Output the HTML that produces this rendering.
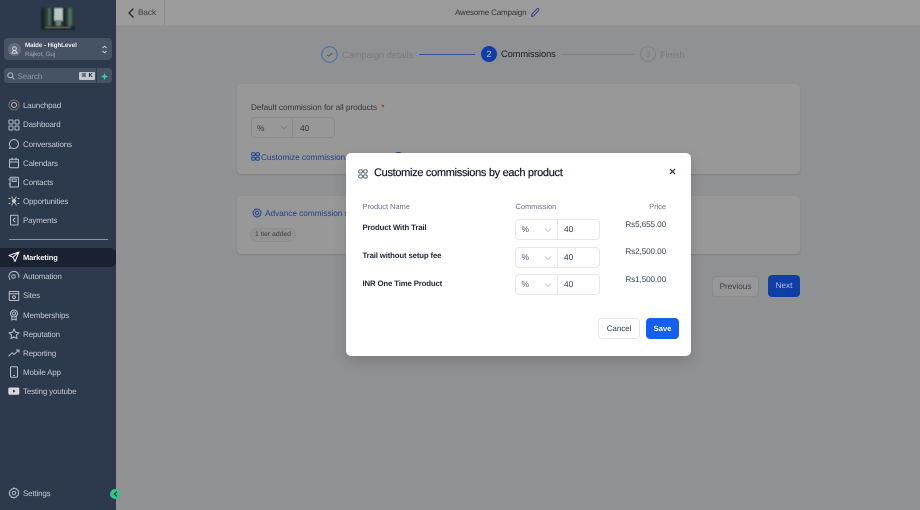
<!DOCTYPE html>
<html><head><meta charset="utf-8">
<style>
*{box-sizing:border-box}
html,body{margin:0;padding:0;width:920px;height:510px;overflow:hidden;background:#909193;font-family:"Liberation Sans",sans-serif;text-rendering:geometricPrecision}
.a{position:absolute;white-space:nowrap}
#side{position:absolute;left:0;top:0;width:116px;height:510px;background:#2d394c}
.nav{position:absolute;left:23px;margin-top:.8px;font-size:8px;letter-spacing:-.18px;color:#c3c8d0;font-weight:400;line-height:12px;white-space:nowrap}
svg.i{position:absolute;left:8px;width:12px;height:12px;fill:none;stroke:#b9bfc9;stroke-width:1;stroke-linecap:round;stroke-linejoin:round}
.card{position:absolute;background:#989898;border-radius:4px;box-shadow:0 1px 2px rgba(0,0,0,.12)}
.sel{position:absolute;border:1px solid #e5e7eb;border-radius:4px;background:#fff;width:85px;height:21px}
.sel i{position:absolute;left:41px;top:0;height:19px;width:1px;background:#e5e7eb}
.sel b{position:absolute;left:5.5px;top:4px;font:400 8.400px "Liberation Sans",sans-serif;color:#4b5563}
.sel u{position:absolute;left:48px;top:4px;text-decoration:none;font:400 8.400px "Liberation Sans",sans-serif;color:#374151}
.sel svg{position:absolute;left:28px;top:7px;width:8px;height:6px;fill:none;stroke:#c5c9d0;stroke-width:1}
.pn{position:absolute;left:362.5px;margin-top:.8px;font-size:7.800px;font-weight:700;color:#1f2937;letter-spacing:-.15px;white-space:nowrap;line-height:12px}
.pr{position:absolute;right:254px;margin-top:.5px;font-size:8.100px;letter-spacing:-.08px;color:#374151;white-space:nowrap;line-height:12px}
</style></head><body>

<!-- top bar -->
<div class="a" style="left:116px;top:0;width:804px;height:26px;background:#9b9b9b;border-bottom:1px solid #939393"></div>
<div class="a" style="left:164px;top:0;width:1px;height:26px;background:#8d8d8d"></div>
<svg class="a" style="left:127px;top:8px" width="8" height="10" viewBox="0 0 8 10" fill="none" stroke="#2c2f36" stroke-width="1.500" stroke-linecap="round" stroke-linejoin="round"><path d="M6 1 2 5l4 4"/></svg>
<div class="a" style="left:138px;top:7px;font-size:8.200px;letter-spacing:-.05px;line-height:12px;color:#3c3f45">Back</div>
<div class="a" style="left:455px;top:7px;font-size:8px;letter-spacing:-.14px;line-height:12px;color:#33363c">Awesome Campaign</div>
<svg class="a" style="left:530px;top:7px" width="10" height="11" viewBox="0 0 10 11" fill="none" stroke="#31408a" stroke-width="1" stroke-linejoin="round"><path d="M1.500 9.500 2 7 7 1.800a1 1 0 0 1 1.600 1.500L3.800 8.800z"/></svg>

<!-- stepper -->
<svg class="a" style="left:321px;top:46px" width="17" height="17" viewBox="0 0 17 17" fill="none"><circle cx="8.500" cy="8.500" r="7.700" stroke="#4a66a8" stroke-width="1"/><path d="M6 8.700l1.700 1.600L11 7" stroke="#565b66" stroke-width="1"/></svg>
<div class="a" style="left:342px;top:48px;font-size:9.400px;letter-spacing:-.07px;line-height:13px;color:#797b7f">Campaign details</div>
<div class="a" style="left:419px;top:54px;width:56px;height:1px;background:#33509b"></div>
<div class="a" style="left:481px;top:46px;width:16px;height:16px;border-radius:50%;background:#0f3fa5;color:#b9c6e4;font-size:9px;line-height:16px;text-align:center">2</div>
<div class="a" style="left:501px;top:48px;font-size:9.300px;letter-spacing:-.1px;line-height:13px;color:#1b1e26">Commissions</div>
<div class="a" style="left:561px;top:54px;width:73px;height:1px;background:#808185"></div>
<div class="a" style="left:640px;top:46px;width:16px;height:16px;border-radius:50%;border:1px solid #808185;color:#7d7f83;font-size:9px;line-height:14px;text-align:center">3</div>
<div class="a" style="left:660px;top:48px;font-size:9.400px;letter-spacing:-.07px;line-height:13px;color:#797b7f">Finish</div>

<!-- card 1 -->
<div class="card" style="left:237px;top:84px;width:563px;height:90px"></div>
<div class="a" style="left:251px;top:102px;font-size:8.200px;letter-spacing:-.04px;line-height:12px;color:#333">Default commission for all products <span style="color:#8e1a1a;margin-left:2px">*</span></div>
<div class="a" style="left:251px;top:117px;width:84px;height:21px;border:1px solid #8c8c8c;border-radius:4px;background:#989898"></div>
<div class="a" style="left:292px;top:118px;width:1px;height:19px;background:#8a8a8a"></div>
<div class="a" style="left:257px;top:122px;font-size:8.400px;line-height:12px;color:#3a3a3a">%</div>
<svg class="a" style="left:280px;top:125px" width="8" height="5" viewBox="0 0 8 5" fill="none" stroke="#7f7f7f"><path d="M1 1l3 3 3-3"/></svg>
<div class="a" style="left:300px;top:122px;font-size:8.400px;line-height:12px;color:#333">40</div>
<svg class="a" style="left:250.500px;top:152px" width="9" height="9" viewBox="0 0 9 9" fill="none" stroke="#1f3f94" stroke-width="1"><rect x=".6" y=".8" width="3.500" height="3" rx="1.200"/><rect x="4.900" y=".8" width="3.500" height="3" rx="1.200"/><rect x=".6" y="5.200" width="3.500" height="3" rx="1.200"/><rect x="4.900" y="5.200" width="3.500" height="3" rx="1.200"/></svg>
<div class="a" style="left:261px;top:151px;font-size:8.300px;letter-spacing:-.06px;line-height:12px;color:#23408f">Customize commission for</div>
<div class="a" style="left:394px;top:152px;width:9px;height:4px;background:#23408f;border-radius:4px 4px 0 0"></div>

<!-- card 2 -->
<div class="card" style="left:237px;top:196px;width:563px;height:58px"></div>
<svg class="a" style="left:252px;top:208px" width="10" height="10" viewBox="0 0 10 10" fill="none" stroke="#1f3f94" stroke-width="1"><circle cx="5" cy="5" r="4"/><circle cx="5" cy="5" r="1.700"/></svg>
<div class="a" style="left:265px;top:207px;font-size:8.300px;letter-spacing:-.06px;line-height:12px;color:#23408f">Advance commission settings</div>
<div class="a" style="left:250px;top:228px;width:46px;height:14px;border-radius:7px;border:1px solid #8d8d8d;background:#939393;color:#3c3c3c;font-size:6.800px;line-height:12px;text-align:center">1 tier added</div>

<!-- nav buttons -->
<div class="a" style="left:712px;top:276px;width:47px;height:21px;background:#979797;border:1px solid #8b8b8b;border-radius:4px;color:#3b3e45;font-size:8.200px;line-height:19px;text-align:center">Previous</div>
<div class="a" style="left:768px;top:275px;width:32px;height:22px;background:#0f3fa5;border-radius:4px;color:#b4c2e2;font-size:8.200px;line-height:22px;text-align:center">Next</div>

<!-- sidebar -->
<div id="side">
  <svg class="a" style="left:41px;top:8px;filter:blur(.8px);overflow:hidden" width="34" height="22" viewBox="0 0 34 22">
    <rect width="34" height="22" fill="#2c3f38"/>
    <rect x="13" y="0" width="9" height="13" fill="#b9c6c4"/>
    <rect x="0" y="0" width="4" height="22" fill="#1b2624"/>
    <rect x="7" y="0" width="3" height="22" fill="#4a6a5c"/>
    <rect x="11" y="0" width="2" height="22" fill="#18221f"/>
    <rect x="22" y="0" width="3" height="22" fill="#1b2624"/>
    <rect x="27" y="0" width="4" height="22" fill="#4d6c5e"/>
    <rect x="15" y="12" width="5" height="6" fill="#74807c"/>
    <rect x="0" y="18" width="34" height="4" fill="#1d2523"/>
    <rect x="4" y="19" width="26" height="1" fill="#8b8f8b"/>
  </svg>
  <div class="a" style="left:4px;top:38px;width:108px;height:22px;background:#475264;border-radius:4px"></div>
  <div class="a" style="left:8px;top:43px;width:13px;height:13px;border-radius:50%;background:#636d7d"></div>
  <svg class="a" style="left:11px;top:45.500px" width="7" height="8" viewBox="0 0 7 8" fill="none" stroke="#dfe2e7" stroke-width=".8"><circle cx="3.500" cy="2.600" r="1.800"/><path d="M.8 7.200c.5-2 1.500-2.500 2.700-2.500s2.200.5 2.700 2.500z"/></svg>
  <div class="a" style="left:25px;top:41px;font-size:6.200px;letter-spacing:-.05px;line-height:9px;color:#eef0f3;font-weight:700">Malde - HighLevel</div>
  <div class="a" style="left:25px;top:50px;font-size:6.200px;letter-spacing:-.05px;line-height:9px;color:#a2a9b5">Rajkot, Guj</div>
  <svg class="a" style="left:101px;top:45px" width="7" height="9" viewBox="0 0 7 9" fill="none" stroke="#d0d4da" stroke-width=".9"><path d="M1.500 3 3.500 1.200 5.500 3M1.500 6l2 1.800L5.500 6"/></svg>

  <div class="a" style="left:4px;top:68px;width:92px;height:15px;background:#475264;border-radius:3px 0 0 3px"></div>
  <div class="a" style="left:97px;top:68px;width:15px;height:15px;background:#475264;border-radius:0 3px 3px 0"></div>
  <svg class="a" style="left:7px;top:72px" width="8" height="8" viewBox="0 0 8 8" fill="none" stroke="#c3c8d0" stroke-width=".9"><circle cx="3.300" cy="3.300" r="2.500"/><path d="M5.200 5.200 7.300 7.300"/></svg>
  <div class="a" style="left:17.500px;top:70.500px;font-size:8px;letter-spacing:-.1px;line-height:11px;color:#8f97a5">Search</div>
  <div class="a" style="left:79px;top:71.500px;width:16px;height:8.500px;background:#c3c7ce;border-radius:1px;color:#2d394c;font-family:'DejaVu Sans',sans-serif;font-size:5.600px;line-height:8.500px;text-align:center;font-weight:700">&#8984; K</div>
  <svg class="a" style="left:101px;top:72.500px" width="7" height="7" viewBox="0 0 7 7"><path d="M3.500 0 4.500 2.500 7 3.500 4.500 4.500 3.500 7 2.500 4.500 0 3.500 2.500 2.500z" fill="#34d8a0"/></svg>

  <svg class="i" style="top:99px" viewBox="0 0 12 12"><circle cx="6" cy="6" r="5" stroke="#7c6a62"/><circle cx="6" cy="6" r="2.500"/></svg>
  <div class="nav" style="top:99px">Launchpad</div>

  <svg class="i" style="top:118.500px" viewBox="0 0 12 12"><rect x="1" y="1" width="4" height="4" rx=".6"/><rect x="7" y="1" width="4" height="4" rx=".6"/><rect x="1" y="7" width="4" height="4" rx=".6"/><rect x="7" y="7" width="4" height="4" rx=".6"/></svg>
  <div class="nav" style="top:118.500px">Dashboard</div>

  <svg class="i" style="top:138px" viewBox="0 0 12 12"><path d="M6 1.500a4.500 4.500 0 1 1-2.300 8.400L1.500 10.500l.7-2.100A4.500 4.500 0 0 1 6 1.500z"/></svg>
  <div class="nav" style="top:138px">Conversations</div>

  <svg class="i" style="top:157px" viewBox="0 0 12 12"><rect x="1.500" y="2.200" width="9" height="8.500" rx=".8"/><path d="M1.500 5h9M4 1v2M8 1v2"/></svg>
  <div class="nav" style="top:157px">Calendars</div>

  <svg class="i" style="top:176px" viewBox="0 0 12 12"><rect x="2" y="1.200" width="8.500" height="9.800" rx=".8"/><rect x="4.200" y="3" width="4" height="2.500"/><path d="M1 3.500h1.500M1 8h1.500"/></svg>
  <div class="nav" style="top:176px">Contacts</div>

  <svg class="i" style="top:195px" viewBox="0 0 12 12"><circle cx="6" cy="6" r="1.700" fill="#c3c8d0"/><path d="M1 3.500h1M1 8.500h1M3.800 2l1 1.500M8.200 2l-1 1.500M3.800 10l1-1.500M8.200 10l-1-1.500M10 3.500h1M10 8.500h1"/></svg>
  <div class="nav" style="top:195px">Opportunities</div>

  <svg class="i" style="top:214px" viewBox="0 0 12 12"><rect x="2.500" y="1.200" width="7.500" height="9.800" rx=".6"/><path d="M7 4 5 6l2 2"/></svg>
  <div class="nav" style="top:214px">Payments</div>

  <div class="a" style="left:9px;top:239px;width:99px;height:1px;background:#8a93a1"></div>

  <div class="a" style="left:0;top:248px;width:116px;height:19px;background:#1a2232;border-radius:0 5px 5px 0"></div>
  <svg class="i" style="top:251px;stroke:#f2f3f5" viewBox="0 0 12 12"><path d="M11 1 1 4.500l4 1.800L7 10.500zM11 1 5 6.300"/></svg>
  <div class="nav" style="top:251px;color:#f2f3f5;font-weight:700;font-size:7.500px;letter-spacing:-.08px">Marketing</div>

  <svg class="i" style="top:270px" viewBox="0 0 12 12"><path d="M2 9.500A5 5 0 1 1 10.800 7.500"/><circle cx="5.500" cy="6.500" r="1.800"/></svg>
  <div class="nav" style="top:270px">Automation</div>

  <svg class="i" style="top:289.500px" viewBox="0 0 12 12"><rect x="1.200" y="1.500" width="9.600" height="9" rx=".6"/><path d="M1.200 3.800h9.600"/><circle cx="6" cy="7.200" r="1.400"/></svg>
  <div class="nav" style="top:289.500px">Sites</div>

  <svg class="i" style="top:309px" viewBox="0 0 12 12"><circle cx="6" cy="4.500" r="3.500"/><circle cx="6" cy="4.500" r="1.600"/><path d="M3.800 7.500v3.500L6 10l2.200 1V7.500"/></svg>
  <div class="nav" style="top:309px">Memberships</div>

  <svg class="i" style="top:328px" viewBox="0 0 12 12"><path d="M6 1l1.500 3.300 3.500.4-2.600 2.400.7 3.500L6 8.900 2.900 10.600l.7-3.500L1 4.700l3.500-.4z"/></svg>
  <div class="nav" style="top:328px">Reputation</div>

  <svg class="i" style="top:347px" viewBox="0 0 12 12"><path d="M.8 9 4 5.800 6 7.500 11 3M8.500 3H11v2.300"/></svg>
  <div class="nav" style="top:347px">Reporting</div>

  <svg class="i" style="top:366px" viewBox="0 0 12 12"><rect x="2.500" y=".8" width="7" height="10.400" rx="1.200"/><path d="M5.500 9.500h1"/></svg>
  <div class="nav" style="top:366px">Mobile App</div>

  <svg class="i" style="top:385px;stroke:none" viewBox="0 0 12 12"><rect x=".3" y="2.500" width="11" height="7.200" rx="1.600" fill="#d6d9de"/><path d="M5 4.500v3.200L7.500 6z" fill="#2d394c"/></svg>
  <div class="nav" style="top:385px">Testing youtube</div>

  <svg class="i" style="top:487px" viewBox="0 0 12 12"><circle cx="6" cy="6" r="1.800"/><path d="M6 .9l1 .9 1.400-.2.600 1.200 1.300.6-.2 1.400.9 1-.9 1 .2 1.400-1.300.6-.6 1.200L7 10.200l-1 .9-1-.9-1.400.2-.6-1.200-1.300-.6.2-1.400-.9-1 .9-1-.2-1.400 1.300-.6.600-1.200L5 1.800z"/></svg>
  <div class="nav" style="top:487px">Settings</div>
</div>
<div class="a" style="left:110px;top:489px;width:10px;height:10px;border-radius:50%;background:#2bc98f"></div>
<svg class="a" style="left:112.500px;top:491px" width="5" height="6" viewBox="0 0 5 6" fill="none" stroke="#17322b" stroke-width="1.200"><path d="M3.800.7 1.300 3l2.500 2.300"/></svg>

<!-- modal -->
<div class="a" style="left:346px;top:153px;width:345px;height:203px;background:#fff;border-radius:5px;box-shadow:0 6px 14px rgba(0,0,0,.14)"></div>
<svg class="a" style="left:358px;top:169px" width="10" height="10" viewBox="0 0 10 10" fill="none" stroke="#4b5563" stroke-width=".9"><rect x=".8" y=".8" width="3.600" height="3.300" rx="1.400"/><rect x="5.600" y=".8" width="3.600" height="3.300" rx="1.400"/><rect x=".8" y="5.800" width="3.600" height="3.300" rx="1.400"/><rect x="5.600" y="5.800" width="3.600" height="3.300" rx="1.400"/></svg>
<div class="a" style="left:374px;top:166px;font-size:11px;line-height:15px;color:#111827;letter-spacing:-.31px;font-weight:400;-webkit-text-stroke:.2px #111827">Customize commissions by each product</div>
<svg class="a" style="left:669px;top:168px" width="7" height="7" viewBox="0 0 7 7" fill="none" stroke="#1f2937" stroke-width="1.200"><path d="M1 1l5 5M6 1 1 6"/></svg>

<div class="a" style="left:362.500px;top:200.500px;font-size:7.500px;letter-spacing:-.05px;line-height:11px;color:#667085">Product Name</div>
<div class="a" style="left:515.500px;top:200.500px;font-size:7.500px;letter-spacing:-.05px;line-height:11px;color:#667085">Commission</div>
<div class="a" style="right:254px;top:200.500px;font-size:7.500px;letter-spacing:-.05px;line-height:11px;color:#667085">Price</div>

<div class="pn" style="top:221px">Product With Trail</div>
<div class="pn" style="top:249px">Trail without setup fee</div>
<div class="pn" style="top:277px">INR One Time Product</div>

<div class="sel" style="left:515px;top:218.500px"><b>%</b><svg viewBox="0 0 8 6"><path d="M1 1.500l3 3 3-3"/></svg><i></i><u>40</u></div>
<div class="sel" style="left:515px;top:246.500px"><b>%</b><svg viewBox="0 0 8 6"><path d="M1 1.500l3 3 3-3"/></svg><i></i><u>40</u></div>
<div class="sel" style="left:515px;top:274px"><b>%</b><svg viewBox="0 0 8 6"><path d="M1 1.500l3 3 3-3"/></svg><i></i><u>40</u></div>

<div class="pr" style="top:218px">Rs5,655.00</div>
<div class="pr" style="top:245.500px">Rs2,500.00</div>
<div class="pr" style="top:273px">Rs1,500.00</div>

<div class="a" style="left:598px;top:318px;width:42px;height:21px;border:1px solid #e5e7eb;border-radius:4px;background:#fff;color:#344054;font-size:8px;letter-spacing:-.05px;line-height:19px;text-align:center">Cancel</div>
<div class="a" style="left:646px;top:318px;width:33px;height:21px;border-radius:4px;background:#155eef;color:#fff;font-size:7.600px;line-height:21px;text-align:center;font-weight:700">Save</div>

</body></html>
